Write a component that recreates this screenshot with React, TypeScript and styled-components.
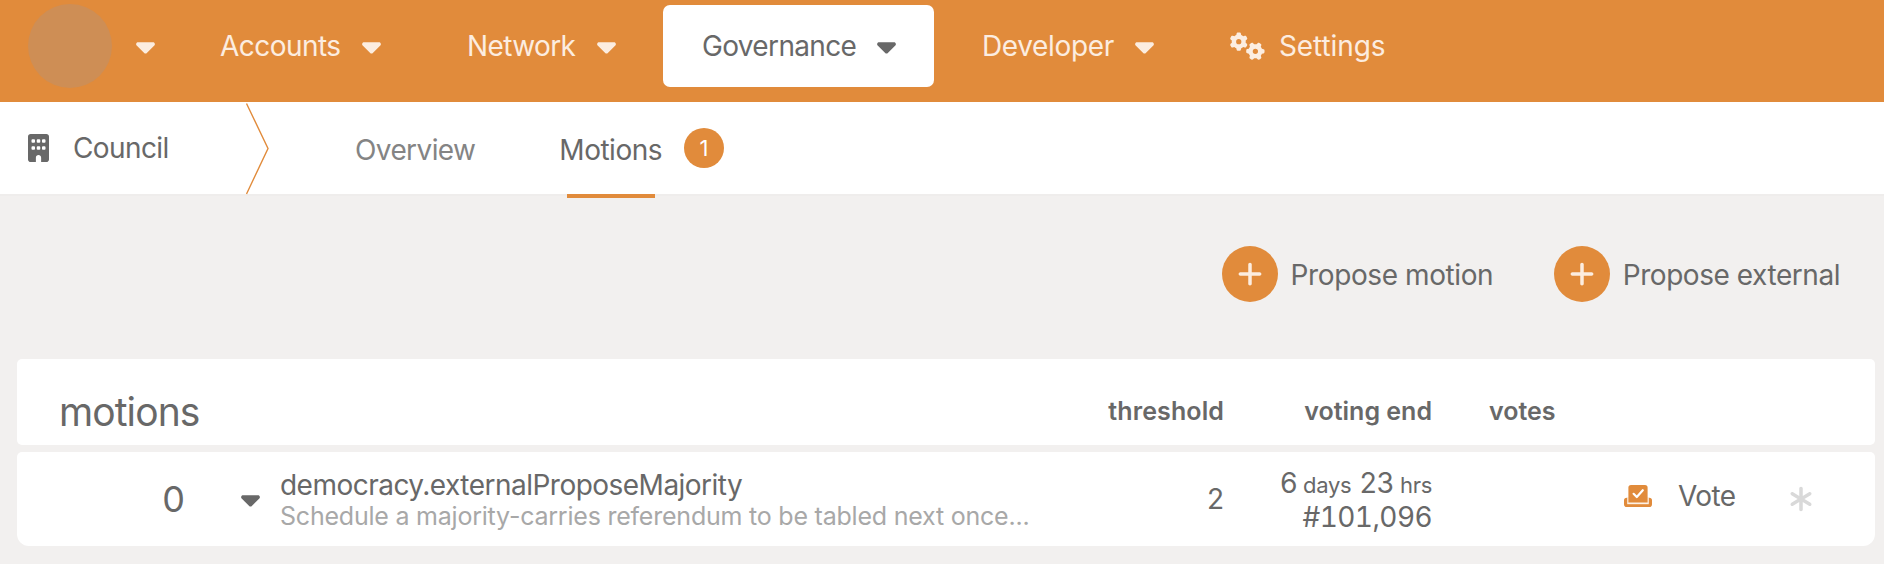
import React from 'react';
import styled, { createGlobalStyle } from 'styled-components';
import { FaAsterisk, FaBuilding, FaCaretDown, FaGears, FaPlus } from 'react-icons/fa6';

const GlobalStyle = createGlobalStyle`
  *, *::before, *::after { box-sizing: border-box; }
  body {
    margin: 0;
    background: #f2f0ef;
    color: #686868;
    font-family: Inter, 'Liberation Sans', sans-serif;
    font-size: 28px;
    font-weight: 440;
    line-height: 32px;
  }
  svg { display: block; flex: none; }
`;

const orange = '#e18b3b';

const Page = styled.div`
  width: 1884px;
  height: 564px;
  overflow: hidden;
`;

const TopBar = styled.header`
  display: flex;
  height: 102px;
  padding: 5px 0 15px 28px;
  background: ${orange};
  color: #fcede0;
`;

const AccountLogo = styled.div`
  width: 84px;
  height: 84px;
  margin: -1px 24px 0 0;
  border-radius: 50%;
  background: #ce8e55;
`;

const Menu = styled.div`
  display: flex;
  gap: 9px;
`;

const NavItem = styled.div<{ $width: number; $active?: boolean }>`
  display: flex;
  align-items: center;
  justify-content: space-between;
  width: ${(p) => p.$width}px;
  height: 82px;
  padding: 0 38px 0 39px;
  border-radius: 7px;
  white-space: nowrap;
  background: ${(p) => (p.$active ? '#fff' : 'transparent')};
  color: ${(p) => (p.$active ? '#686868' : 'inherit')};
`;

const LogoCaret = styled.div`
  display: flex;
  align-items: center;
  width: 45px;
  height: 82px;
`;

const Label = styled.span<{ $spacing?: number }>`
  display: block;
  letter-spacing: ${(p) => p.$spacing ?? 0}px;
  white-space: nowrap;
`;

const Caret = styled(FaCaretDown)`
  width: 19px;
  height: 30px;
`;

const SettingsItem = styled(NavItem)`
  justify-content: flex-start;
  gap: 14px;
  padding: 0 0 0 29px;
`;

const Gears = styled(FaGears)`
  width: 35px;
  height: 28px;
`;

const TabBar = styled.nav`
  display: flex;
  height: 92px;
  background: #fff;
`;

const Section = styled.div`
  display: flex;
  align-items: center;
  width: 246px;
  padding-left: 28px;
  gap: 24px;
`;

const Building = styled(FaBuilding)`
  width: 21px;
  height: 28px;
`;

const Chevron = styled.svg`
  margin-right: 85px;
`;

const Tab = styled.div<{ $active?: boolean }>`
  display: flex;
  align-items: center;
  height: 92px;
  padding-top: 3px;
  color: ${(p) => (p.$active ? '#686868' : '#848484')};
`;

const ActiveTab = styled(Tab)`
  position: relative;
  margin-left: 84px;

  &::after {
    content: '';
    position: absolute;
    left: 8px;
    top: 92px;
    width: 88px;
    height: 4px;
    background: ${orange};
  }
`;

const Badge = styled.span`
  display: flex;
  align-items: center;
  justify-content: center;
  width: 40px;
  height: 40px;
  margin: -3px 0 0 22px;
  border-radius: 50%;
  background: ${orange};
  color: #fff;
  font-size: 22px;
`;

const Actions = styled.div`
  display: flex;
  justify-content: flex-end;
  height: 165px;
  padding: 50px 44px 0 0;
  gap: 61px;
  border-top: 2px solid #efedec;
`;

const ActionButton = styled.div`
  display: flex;
  align-items: center;
  height: 56px;
  gap: 12.5px;

  ${Label} {
    padding-top: 2px;
  }
`;

const RoundIcon = styled.span`
  display: flex;
  align-items: center;
  justify-content: center;
  width: 56px;
  height: 56px;
  border-radius: 50%;
  background: ${orange};
  color: #fcede0;
`;

const Table = styled.main`
  display: flex;
  flex-direction: column;
  gap: 7px;
  width: 1858px;
  margin-left: 17px;
`;

const Row = styled.div`
  display: grid;
  grid-template-columns: 168px 95px 820px 124px 208px 190px 1fr;
  height: 94px;
  border-radius: 5px 5px 12px 12px;
  background: #fff;
`;

const HeadRow = styled(Row)`
  height: 86px;
  border-radius: 5px;
  font-size: 25px;
  font-weight: 620;
`;

const Title = styled.h1`
  grid-column: 1 / 4;
  margin: 31px 0 0 42px;
  font-size: 39px;
  font-weight: 440;
  letter-spacing: -0.9px;
  line-height: 44px;
`;

const HeadCell = styled.div<{ $align?: string }>`
  margin-top: 36px;
  text-align: ${(p) => p.$align ?? 'right'};
  white-space: nowrap;
`;

const VotesHead = styled(HeadCell)`
  padding-left: 57px;
`;

const MotionId = styled.div`
  padding-top: 29px;
  text-align: right;
  font-size: 36px;
  line-height: 36px;
`;

const Expander = styled.div`
  display: flex;
  align-items: center;
  justify-content: flex-end;
  padding: 0 20px 0 0;
`;

const Call = styled.div`
  padding-top: 17px;
  white-space: nowrap;
`;

const Description = styled.div`
  color: #a8a8a8;
  font-size: 25px;
  line-height: 31px;
`;

const Threshold = styled.div`
  padding-top: 31px;
  text-align: right;
`;

const VotingEnd = styled.div`
  padding-top: 15px;
  text-align: right;
  white-space: nowrap;
  font-variant-numeric: tabular-nums;
`;

const Unit = styled.small`
  margin: 0 8px 0 6px;
  font-size: 22px;
  letter-spacing: -0.3px;

  &:last-child {
    margin-right: 0;
  }
`;

const VoteCell = styled.div`
  grid-column: 7;
  display: flex;
  height: 88px;
  align-items: center;
  padding-left: 2px;
`;

const VoteLabel = styled(Label)`
  width: 109px;
  margin-left: 26px;
`;

const Star = styled(FaAsterisk)`
  margin-top: 6px;
  color: #d9d9d9;
`;

const BallotIcon = () => (
  <svg width="28" height="22" viewBox="0 0 28 22" fill="none">
    <path
      d="M2.8 12.7H25.2A2.8 2.8 0 0 1 28 15.5V19.2A2.8 2.8 0 0 1 25.2 22H2.8A2.8 2.8 0 0 1 0 19.2V15.5A2.8 2.8 0 0 1 2.8 12.7Z"
      fill={orange}
    />
    <path d="M3.2 12H24.8V19.2H3.2Z" fill="#fdf1e6" />
    <path d="M7 0H21A2.6 2.6 0 0 1 23.6 2.6V17.4H4.4V2.6A2.6 2.6 0 0 1 7 0Z" fill={orange} />
    <path d="M9.6 8.8L12.8 12L18.8 5.2" stroke="#fff" strokeWidth="2.2" strokeLinecap="round" strokeLinejoin="round" />
  </svg>
);

export default function App() {
  return (
    <Page>
      <GlobalStyle />
      <TopBar>
        <AccountLogo />
        <LogoCaret><Caret /></LogoCaret>
        <Menu>
          <NavItem $width={238}><Label $spacing={-0.55}>Accounts</Label><Caret /></NavItem>
          <NavItem $width={226}><Label $spacing={-0.6}>Network</Label><Caret /></NavItem>
          <NavItem $width={271} $active><Label $spacing={-0.65}>Governance</Label><Caret /></NavItem>
          <NavItem $width={249}><Label $spacing={-0.35}>Developer</Label><Caret /></NavItem>
          <SettingsItem $width={220}><Gears /><Label $spacing={-0.1}>Settings</Label></SettingsItem>
        </Menu>
      </TopBar>
      <TabBar>
        <Section><Building /><Label $spacing={-0.6}>Council</Label></Section>
        <Chevron width="24" height="93" viewBox="0 0 24 93" fill="none">
          <path d="M0.5 1.5L22 46.5L0.5 92" stroke={orange} strokeWidth="1.4" />
        </Chevron>
        <Tab><Label $spacing={-0.6}>Overview</Label></Tab>
        <ActiveTab $active><Label $spacing={-0.5}>Motions</Label><Badge>1</Badge></ActiveTab>
      </TabBar>
      <Actions>
        <ActionButton><RoundIcon><FaPlus size={28} /></RoundIcon><Label $spacing={-0.4}>Propose motion</Label></ActionButton>
        <ActionButton><RoundIcon><FaPlus size={28} /></RoundIcon><Label $spacing={-0.45}>Propose external</Label></ActionButton>
      </Actions>
      <Table>
        <HeadRow>
          <Title>motions</Title>
          <HeadCell><Label $spacing={0.1}>threshold</Label></HeadCell>
          <HeadCell>voting end</HeadCell>
          <VotesHead $align="left">votes</VotesHead>
        </HeadRow>
        <Row>
          <MotionId>0</MotionId>
          <Expander><Caret /></Expander>
          <Call>
            <Label $spacing={-0.52}>democracy.externalProposeMajority</Label>
            <Description><Label $spacing={-0.22}>Schedule a majority-carries referendum to be tabled next once...</Label></Description>
          </Call>
          <Threshold>2</Threshold>
          <VotingEnd>
            <Label $spacing={-0.8}>6<Unit>days</Unit>23<Unit>hrs</Unit></Label>
            <Label $spacing={-0.6}>#101,096</Label>
          </VotingEnd>
          <VoteCell><BallotIcon /><VoteLabel $spacing={-0.6}>Vote</VoteLabel><Star size={28} /></VoteCell>
        </Row>
      </Table>
    </Page>
  );
}
